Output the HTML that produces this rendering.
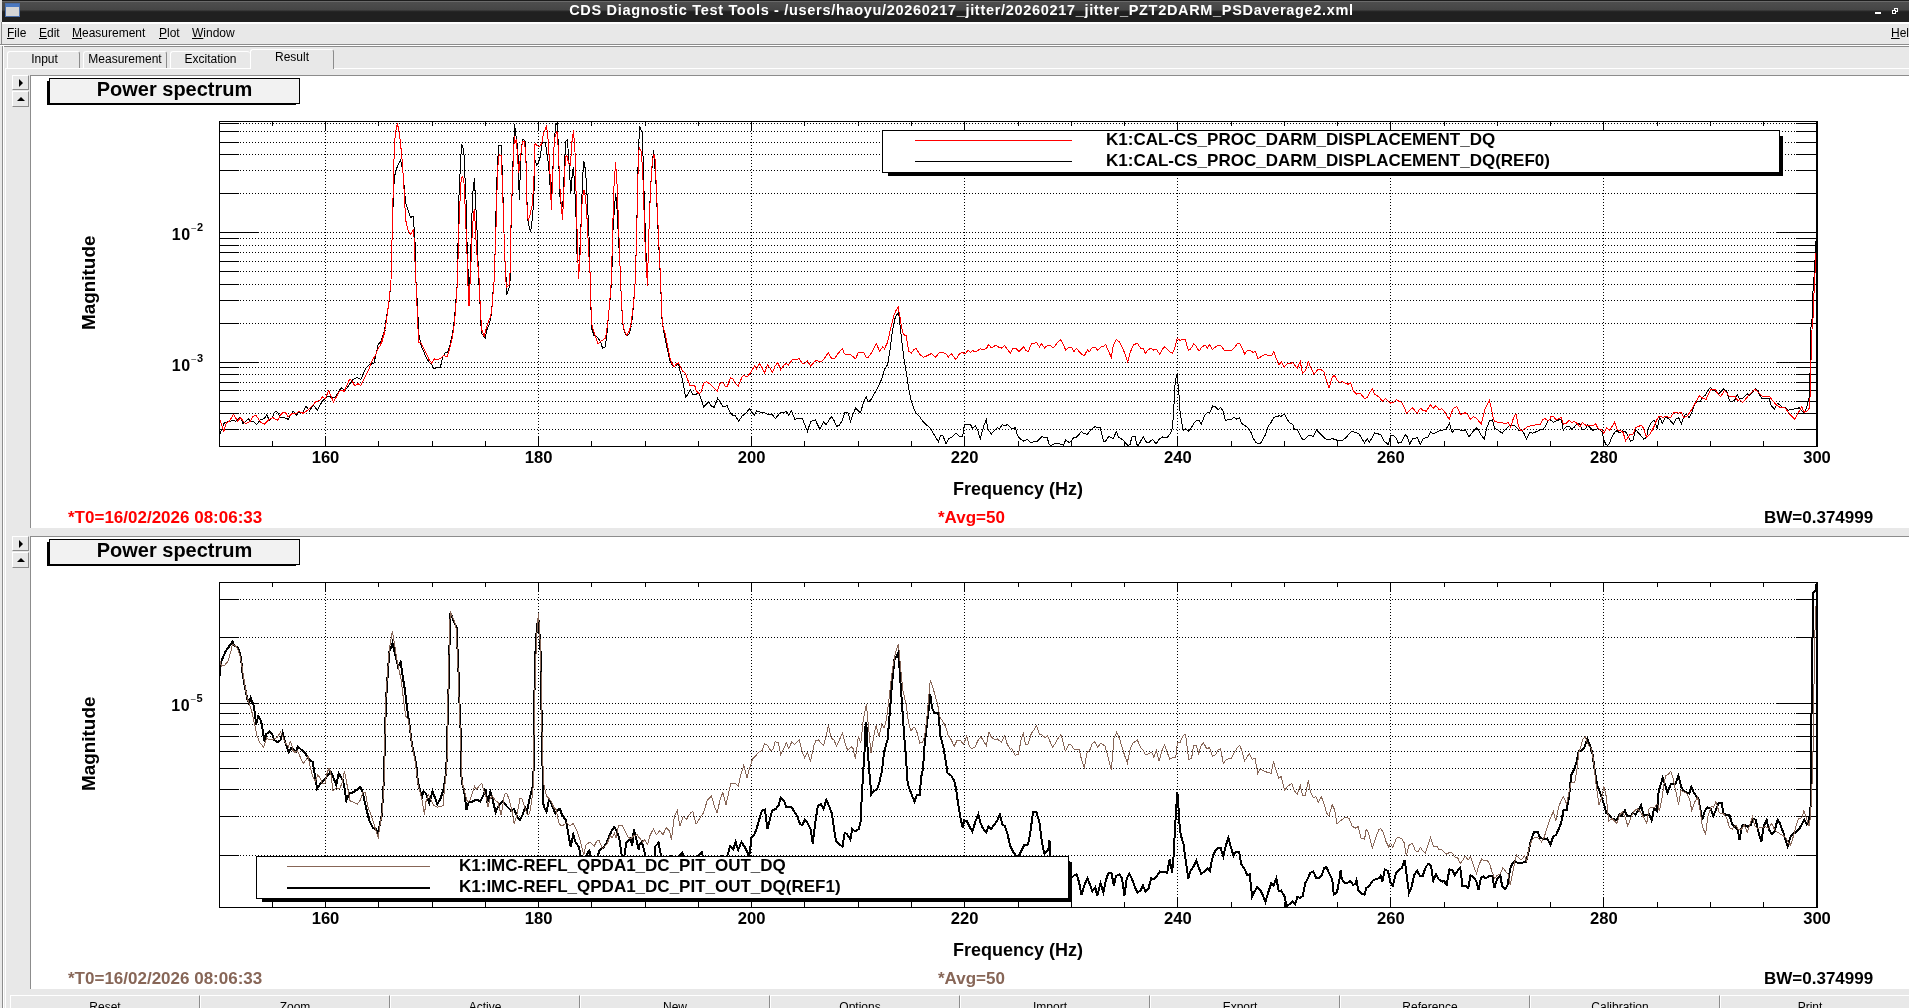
<!DOCTYPE html>
<html><head><meta charset="utf-8"><title>CDS Diagnostic Test Tools</title>
<style>
html,body{margin:0;padding:0;}
body{width:1909px;height:1008px;overflow:hidden;background:#e8e8e8;font-family:"Liberation Sans",sans-serif;position:relative;color:#000}
.abs{position:absolute}
#titlebar{position:absolute;left:0;top:0;width:1909px;height:22px;background:linear-gradient(#1c1c1c 0,#1c1c1c 1px,#6a6a6a 1px,#6a6a6a 2px,#4e4e4e 2px,#454545 10px,#2a2a2a 11px,#202020 12px,#202020 100%);}
#titlebar .t{position:absolute;left:0;width:1923px;top:1px;text-align:center;color:#fff;font-weight:bold;font-size:14.5px;line-height:18px;letter-spacing:0.684px;white-space:nowrap}
#menubar{position:absolute;left:3px;top:22px;width:1909px;height:22px;font-size:12px;}
#menubar span{position:absolute;top:4px;line-height:14px}
.tab{position:absolute;font-size:12px;line-height:14px;text-align:center}
.pad{position:absolute;left:31px;width:1878px;background:#fff}
.tbox{position:absolute;left:49px;width:249px;height:24px;border:1px solid #000;background:#f2f2f2;font-weight:bold;font-size:20px;line-height:20px;text-align:center;white-space:nowrap}
.sbtn{position:absolute;left:12px;width:15px;height:14px;border-right:1px solid #8c8c8c;border-bottom:1px solid #8c8c8c;border-top:1px solid #fff;border-left:1px solid #fff;box-sizing:content-box}
.sbtn svg{position:absolute;left:0;top:0}
.bbtn{position:absolute;top:995px;width:188px;height:20px;border-left:1px solid #fff;border-top:1px solid #fff;border-right:1px solid #8c8c8c;font-size:12px;line-height:14px;text-align:center;padding-top:4px;box-sizing:content-box}
.lbl{position:absolute;font-weight:bold;white-space:nowrap}
.ax{font-size:17px;line-height:18px}
.fq{font-size:18px;line-height:20px}
.mg{font-size:18.9px;line-height:20px}
.bt{font-size:17px;line-height:18px}
.xt{position:absolute;font-weight:bold;font-size:16.6px;line-height:16px;width:60px;text-align:center;white-space:nowrap}
.yt{position:absolute;font-weight:bold;font-size:16px;line-height:16px;width:60px;text-align:right;white-space:nowrap;letter-spacing:0.5px}
.yt sup{font-size:11px;line-height:0;position:relative;top:-9.2px;vertical-align:baseline;margin-left:1.5px;letter-spacing:0}
.yt sup i{font-style:normal;font-weight:normal;font-size:10px;color:#444;margin-left:-1px;position:relative;top:1.5px}
u{text-decoration:underline}
</style></head><body><div id="root" style="position:absolute;left:0;top:0;width:1909px;height:1008px;will-change:transform;overflow:hidden">
<div id="titlebar"><div class="t">CDS Diagnostic Test Tools - /users/haoyu/20260217_jitter/20260217_jitter_PZT2DARM_PSDaverage2.xml</div>
<svg class="abs" style="left:5px;top:3px" width="16" height="16"><rect x="0.5" y="0.5" width="14" height="13" fill="#d4d4d4" stroke="#4a6ea8"/><rect x="1" y="1" width="13" height="3" fill="#4a78c0"/></svg>
<svg class="abs" style="left:1870px;top:4px" width="36" height="14"><rect x="5" y="8" width="6" height="2" fill="#fff"/><rect x="24.5" y="4.5" width="3" height="3" fill="none" stroke="#fff"/><rect x="22.5" y="6.5" width="3" height="3" fill="#202020" stroke="#fff"/></svg>
</div>
<div id="menubar">
<span style="left:4px"><u>F</u>ile</span>
<span style="left:36px"><u>E</u>dit</span>
<span style="left:69px"><u>M</u>easurement</span>
<span style="left:156px"><u>P</u>lot</span>
<span style="left:189px"><u>W</u>indow</span>
<span style="left:1888px"><u>H</u>elp</span>
</div>
<!-- separators -->
<div class="abs" style="left:2px;top:22px;width:1909px;height:2px;background:#fff"></div>
<div class="abs" style="left:0;top:0;width:2px;height:22px;background:#e0e0e0"></div>
<div class="abs" style="left:2px;top:46px;width:1909px;height:1px;background:#8c8c8c"></div>
<div class="abs" style="left:0;top:44px;width:1909px;height:1px;background:#8c8c8c"></div>
<div class="abs" style="left:0;top:45px;width:1909px;height:1px;background:#fff"></div>
<div class="abs" style="left:1px;top:22px;width:1px;height:22px;background:#8c8c8c"></div>
<div class="abs" style="left:2px;top:46px;width:1px;height:962px;background:#8c8c8c"></div>
<div class="abs" style="left:3px;top:46px;width:1px;height:962px;background:#fff"></div>
<!-- tabs -->
<div class="abs" style="left:5px;top:68px;width:1909px;height:1px;background:#fff"></div>
<div class="abs" style="left:5px;top:68px;width:1px;height:940px;background:#fff"></div>
<div class="tab" style="left:7px;top:51px;width:73px;height:17px;border-top:1px solid #fff;border-left:1px solid #fff;border-right:1px solid #8c8c8c;border-radius:3px 3px 0 0;padding-top:0px;box-sizing:border-box;padding-left:2px">Input</div>
<div class="tab" style="left:83px;top:51px;width:84px;height:17px;border-top:1px solid #fff;border-left:1px solid #fff;border-right:1px solid #8c8c8c;border-radius:3px 3px 0 0;padding-top:0px;box-sizing:border-box">Measurement</div>
<div class="tab" style="left:170px;top:51px;width:80px;height:17px;border-top:1px solid #fff;border-left:1px solid #fff;border-radius:3px 3px 0 0;padding-top:0px;box-sizing:border-box">Excitation</div>
<div class="tab" style="left:250px;top:49px;width:84px;height:20px;border-top:1px solid #fff;border-left:1px solid #fff;border-right:1px solid #8c8c8c;background:#e8e8e8;border-radius:3px 3px 0 0;padding-top:0px;box-sizing:border-box">Result</div>

<!-- pads -->
<div class="abs" style="left:30px;top:75px;width:1879px;height:453px;background:#8c8c8c"></div>
<div class="pad" style="top:76px;height:452px"></div>
<div class="abs" style="left:30px;top:536px;width:1879px;height:453px;background:#8c8c8c"></div>
<div class="pad" style="top:537px;height:452px"></div>
<div class="sbtn" style="top:75px;height:13px"><svg width="16" height="15"><path d="M6,3 L10,7 L6,11 Z" fill="#000"/></svg></div>
<div class="sbtn" style="top:91px"><svg width="16" height="15"><path d="M4,9 L8,5 L12,9 Z" fill="#000"/></svg></div>
<div class="sbtn" style="top:536px;height:13px"><svg width="16" height="15"><path d="M6,3 L10,7 L6,11 Z" fill="#000"/></svg></div>
<div class="sbtn" style="top:552px"><svg width="16" height="15"><path d="M4,9 L8,5 L12,9 Z" fill="#000"/></svg></div>
<div style="position:absolute;left:47px;top:81px;width:249px;height:24px;background:#000"></div>
<div class="tbox" style="top:78px">Power spectrum</div>
<div style="position:absolute;left:47px;top:542px;width:249px;height:24px;background:#000"></div>
<div class="tbox" style="top:539px">Power spectrum</div>

<svg class="abs" style="left:0;top:0" width="1909" height="1008" shape-rendering="crispEdges" fill="none">
<path d="M219,123.5H1817" stroke="#000" stroke-width="1" stroke-dasharray="1 2"/>
<path d="M219,123.5H239M1796,123.5H1818" stroke="#000" stroke-width="1"/>
<path d="M219,131.5H1817" stroke="#000" stroke-width="1" stroke-dasharray="1 2"/>
<path d="M219,131.5H239M1796,131.5H1818" stroke="#000" stroke-width="1"/>
<path d="M219,142.5H1817" stroke="#000" stroke-width="1" stroke-dasharray="1 2"/>
<path d="M219,142.5H239M1796,142.5H1818" stroke="#000" stroke-width="1"/>
<path d="M219,154.5H1817" stroke="#000" stroke-width="1" stroke-dasharray="1 2"/>
<path d="M219,154.5H239M1796,154.5H1818" stroke="#000" stroke-width="1"/>
<path d="M219,170.5H1817" stroke="#000" stroke-width="1" stroke-dasharray="1 2"/>
<path d="M219,170.5H239M1796,170.5H1818" stroke="#000" stroke-width="1"/>
<path d="M219,193.5H1817" stroke="#000" stroke-width="1" stroke-dasharray="1 2"/>
<path d="M219,193.5H239M1796,193.5H1818" stroke="#000" stroke-width="1"/>
<path d="M219,232.5H1817" stroke="#000" stroke-width="1" stroke-dasharray="1 2"/>
<path d="M219,232.5H258M1776,232.5H1818" stroke="#000" stroke-width="1"/>
<path d="M219,238.5H1817" stroke="#000" stroke-width="1" stroke-dasharray="1 2"/>
<path d="M219,238.5H239M1796,238.5H1818" stroke="#000" stroke-width="1"/>
<path d="M219,245.5H1817" stroke="#000" stroke-width="1" stroke-dasharray="1 2"/>
<path d="M219,245.5H239M1796,245.5H1818" stroke="#000" stroke-width="1"/>
<path d="M219,252.5H1817" stroke="#000" stroke-width="1" stroke-dasharray="1 2"/>
<path d="M219,252.5H239M1796,252.5H1818" stroke="#000" stroke-width="1"/>
<path d="M219,261.5H1817" stroke="#000" stroke-width="1" stroke-dasharray="1 2"/>
<path d="M219,261.5H239M1796,261.5H1818" stroke="#000" stroke-width="1"/>
<path d="M219,271.5H1817" stroke="#000" stroke-width="1" stroke-dasharray="1 2"/>
<path d="M219,271.5H239M1796,271.5H1818" stroke="#000" stroke-width="1"/>
<path d="M219,284.5H1817" stroke="#000" stroke-width="1" stroke-dasharray="1 2"/>
<path d="M219,284.5H239M1796,284.5H1818" stroke="#000" stroke-width="1"/>
<path d="M219,300.5H1817" stroke="#000" stroke-width="1" stroke-dasharray="1 2"/>
<path d="M219,300.5H239M1796,300.5H1818" stroke="#000" stroke-width="1"/>
<path d="M219,323.5H1817" stroke="#000" stroke-width="1" stroke-dasharray="1 2"/>
<path d="M219,323.5H239M1796,323.5H1818" stroke="#000" stroke-width="1"/>
<path d="M219,362.5H1817" stroke="#000" stroke-width="1" stroke-dasharray="1 2"/>
<path d="M219,362.5H258M1776,362.5H1818" stroke="#000" stroke-width="1"/>
<path d="M219,367.5H1817" stroke="#000" stroke-width="1" stroke-dasharray="1 2"/>
<path d="M219,367.5H239M1796,367.5H1818" stroke="#000" stroke-width="1"/>
<path d="M219,374.5H1817" stroke="#000" stroke-width="1" stroke-dasharray="1 2"/>
<path d="M219,374.5H239M1796,374.5H1818" stroke="#000" stroke-width="1"/>
<path d="M219,382.5H1817" stroke="#000" stroke-width="1" stroke-dasharray="1 2"/>
<path d="M219,382.5H239M1796,382.5H1818" stroke="#000" stroke-width="1"/>
<path d="M219,390.5H1817" stroke="#000" stroke-width="1" stroke-dasharray="1 2"/>
<path d="M219,390.5H239M1796,390.5H1818" stroke="#000" stroke-width="1"/>
<path d="M219,401.5H1817" stroke="#000" stroke-width="1" stroke-dasharray="1 2"/>
<path d="M219,401.5H239M1796,401.5H1818" stroke="#000" stroke-width="1"/>
<path d="M219,413.5H1817" stroke="#000" stroke-width="1" stroke-dasharray="1 2"/>
<path d="M219,413.5H239M1796,413.5H1818" stroke="#000" stroke-width="1"/>
<path d="M219,429.5H1817" stroke="#000" stroke-width="1" stroke-dasharray="1 2"/>
<path d="M219,429.5H239M1796,429.5H1818" stroke="#000" stroke-width="1"/>
<path d="M325.5,121V446" stroke="#000" stroke-width="1" stroke-dasharray="1 2"/>
<path d="M538.5,121V446" stroke="#000" stroke-width="1" stroke-dasharray="1 2"/>
<path d="M751.5,121V446" stroke="#000" stroke-width="1" stroke-dasharray="1 2"/>
<path d="M964.5,121V446" stroke="#000" stroke-width="1" stroke-dasharray="1 2"/>
<path d="M1177.5,121V446" stroke="#000" stroke-width="1" stroke-dasharray="1 2"/>
<path d="M1390.5,121V446" stroke="#000" stroke-width="1" stroke-dasharray="1 2"/>
<path d="M1603.5,121V446" stroke="#000" stroke-width="1" stroke-dasharray="1 2"/>
<path d="M272.5,447V441M272.5,121V126" stroke="#000" stroke-width="1"/>
<path d="M325.5,447V436M325.5,121V131" stroke="#000" stroke-width="1"/>
<path d="M378.5,447V441M378.5,121V126" stroke="#000" stroke-width="1"/>
<path d="M432.5,447V441M432.5,121V126" stroke="#000" stroke-width="1"/>
<path d="M485.5,447V441M485.5,121V126" stroke="#000" stroke-width="1"/>
<path d="M538.5,447V436M538.5,121V131" stroke="#000" stroke-width="1"/>
<path d="M591.5,447V441M591.5,121V126" stroke="#000" stroke-width="1"/>
<path d="M645.5,447V441M645.5,121V126" stroke="#000" stroke-width="1"/>
<path d="M698.5,447V441M698.5,121V126" stroke="#000" stroke-width="1"/>
<path d="M751.5,447V436M751.5,121V131" stroke="#000" stroke-width="1"/>
<path d="M804.5,447V441M804.5,121V126" stroke="#000" stroke-width="1"/>
<path d="M858.5,447V441M858.5,121V126" stroke="#000" stroke-width="1"/>
<path d="M911.5,447V441M911.5,121V126" stroke="#000" stroke-width="1"/>
<path d="M964.5,447V436M964.5,121V131" stroke="#000" stroke-width="1"/>
<path d="M1018.5,447V441M1018.5,121V126" stroke="#000" stroke-width="1"/>
<path d="M1071.5,447V441M1071.5,121V126" stroke="#000" stroke-width="1"/>
<path d="M1124.5,447V441M1124.5,121V126" stroke="#000" stroke-width="1"/>
<path d="M1177.5,447V436M1177.5,121V131" stroke="#000" stroke-width="1"/>
<path d="M1231.5,447V441M1231.5,121V126" stroke="#000" stroke-width="1"/>
<path d="M1284.5,447V441M1284.5,121V126" stroke="#000" stroke-width="1"/>
<path d="M1337.5,447V441M1337.5,121V126" stroke="#000" stroke-width="1"/>
<path d="M1390.5,447V436M1390.5,121V131" stroke="#000" stroke-width="1"/>
<path d="M1444.5,447V441M1444.5,121V126" stroke="#000" stroke-width="1"/>
<path d="M1497.5,447V441M1497.5,121V126" stroke="#000" stroke-width="1"/>
<path d="M1550.5,447V441M1550.5,121V126" stroke="#000" stroke-width="1"/>
<path d="M1603.5,447V436M1603.5,121V131" stroke="#000" stroke-width="1"/>
<path d="M1657.5,447V441M1657.5,121V126" stroke="#000" stroke-width="1"/>
<path d="M1710.5,447V441M1710.5,121V126" stroke="#000" stroke-width="1"/>
<path d="M1763.5,447V441M1763.5,121V126" stroke="#000" stroke-width="1"/>
<clipPath id="clip121"><rect x="219" y="121" width="1599" height="326"/></clipPath>
<g clip-path="url(#clip121)" fill="none" stroke-linejoin="miter">
<path d="M219.8,434.8 L221.5,430.0 L224.5,422.3 L228.7,421.7 L232.9,420.5 L235.8,421.1 L240.0,416.9 L243.0,423.5 L248.9,418.7 L250.7,421.7 L253.1,421.1 L256.7,424.6 L260.8,419.3 L264.4,418.7 L266.8,414.5 L269.2,420.5 L272.1,418.1 L274.5,412.1 L276.9,411.5 L280.5,417.5 L284.0,417.5 L288.2,419.3 L293.0,411.0 L296.5,415.1 L298.9,412.1 L302.5,413.3 L306.1,406.2 L309.6,411.0 L313.2,405.0 L317.4,410.4 L322.1,401.4 L325.7,397.9 L328.1,396.1 L332.9,397.9 L335.2,397.3 L341.2,387.7 L344.8,390.7 L348.3,386.0 L353.1,379.4 L357.3,377.6 L360.8,379.4 L365.6,368.7 L369.8,364.5 L373.9,363.3 L377.5,347.9 L378.1,344.3 L381.7,341.3 L385.2,330.0 L380.0,343.2 L382.5,338.1 L384.7,328.8 L387.1,313.7 L389.3,300.2 L391.0,279.9 L392.6,216.2 L394.3,177.4 L396.4,169.0 L398.6,163.9 L400.6,160.2 L402.8,170.7 L403.6,180.8 L405.6,202.7 L407.8,209.4 L410.4,217.5 L413.2,216.2 L414.2,229.7 L415.1,243.2 L415.4,263.4 L415.9,279.9 L417.4,303.6 L418.8,333.9 L421.3,346.6 L424.2,352.5 L426.4,358.4 L428.9,361.7 L431.9,365.1 L434.3,368.8 L437.3,367.3 L440.4,367.3 L442.7,356.7 L445.3,352.8 L447.5,352.8 L450.0,344.9 L452.5,333.9 L454.7,316.2 L456.2,296.8 L457.6,279.9 L458.4,207.8 L459.6,182.5 L461.0,153.8 L461.8,144.5 L463.8,149.6 L464.8,173.2 L466.0,199.3 L467.2,249.9 L468.5,279.9 L469.4,292.6 L470.2,271.8 L471.1,241.5 L471.9,216.2 L472.8,193.4 L474.4,178.2 L475.8,206.1 L477.0,229.7 L477.8,255.0 L478.7,279.9 L479.8,298.5 L480.7,323.8 L482.0,333.9 L485.4,338.1 L486.6,330.5 L488.8,325.5 L490.8,318.7 L492.2,303.6 L493.3,288.4 L494.2,279.9 L495.2,248.2 L496.4,194.3 L497.5,162.2 L498.9,145.4 L501.1,145.4 L502.3,170.7 L504.0,233.1 L505.1,263.4 L506.2,279.9 L506.5,295.1 L509.0,288.4 L510.2,279.9 L510.7,249.9 L511.2,216.2 L512.4,185.8 L513.2,153.8 L514.6,124.3 L515.8,134.4 L516.9,142.0 L518.0,154.6 L518.6,182.5 L519.6,200.2 L520.3,165.6 L521.7,145.4 L522.8,139.5 L525.0,140.3 L526.1,162.2 L526.7,196.0 L528.1,222.9 L530.6,232.2 L532.6,216.2 L533.8,197.6 L535.0,159.7 L536.7,164.8 L538.4,163.1 L540.1,157.2 L542.1,142.8 L545.5,142.8 L546.8,152.1 L548.5,163.9 L549.8,182.5 L551.0,197.6 L552.7,172.3 L554.1,145.4 L555.6,125.1 L557.3,122.6 L558.3,145.4 L559.8,196.0 L561.5,206.9 L562.8,206.1 L564.5,165.6 L565.7,141.1 L567.4,140.0 L568.4,153.8 L569.6,172.3 L570.8,194.3 L572.4,172.3 L573.5,167.3 L574.6,185.8 L575.8,209.4 L577.2,261.7 L579.2,260.0 L580.5,239.8 L581.9,196.0 L583.1,170.7 L583.9,161.4 L585.6,170.7 L587.3,199.3 L589.0,236.4 L590.1,275.2 L590.7,279.9 L591.0,310.3 L591.8,328.8 L594.0,335.6 L596.1,336.4 L598.2,338.1 L600.8,342.3 L602.5,348.2 L605.0,347.1 L606.7,337.3 L607.9,322.1 L609.2,308.6 L610.6,293.4 L611.7,279.9 L612.9,231.4 L614.3,211.1 L615.6,192.6 L617.1,209.4 L618.5,239.8 L619.8,260.0 L620.5,279.9 L621.5,301.9 L622.7,323.8 L624.4,332.2 L626.9,335.6 L629.4,333.6 L631.5,325.5 L632.8,312.0 L634.2,295.1 L635.3,279.9 L636.2,248.2 L637.4,199.3 L638.2,157.2 L639.6,126.5 L642.4,132.7 L643.4,170.7 L644.6,209.4 L645.8,249.9 L647.2,273.5 L648.0,263.4 L649.2,222.9 L650.5,187.5 L652.2,165.6 L653.6,149.6 L654.7,163.9 L656.1,185.8 L657.6,219.6 L659.0,249.9 L660.1,271.8 L660.5,279.9 L661.2,298.5 L661.8,317.0 L663.2,328.8 L665.2,339.0 L666.9,347.4 L668.2,352.5 L669.9,360.9 L671.9,365.1 L674.1,366.8 L676.3,365.1 L678.4,363.4 L680.0,371.0 L681.7,376.1 L683.4,384.5 L685.6,397.2 L687.6,394.6 L690.2,389.6 L692.7,394.3 L695.0,394.6 L696.1,394.2 L699.1,393.0 L701.4,399.8 L703.7,407.1 L706.7,403.6 L709.0,402.1 L711.3,405.9 L714.3,407.4 L717.6,398.0 L719.6,401.3 L722.7,406.2 L727.2,405.9 L730.3,412.7 L732.5,415.0 L734.8,415.0 L738.6,421.1 L742.4,415.8 L746.2,412.7 L749.7,408.6 L752.3,412.7 L754.6,415.0 L756.8,410.8 L759.9,412.0 L764.4,412.7 L767.5,414.3 L772.0,414.3 L775.4,418.4 L780.4,412.7 L783.0,412.7 L786.5,411.7 L788.7,415.0 L791.5,410.8 L794.8,419.3 L798.6,418.4 L802.4,418.8 L807.4,431.3 L810.8,421.4 L815.3,419.9 L819.9,429.4 L823.7,421.8 L826.0,424.9 L831.3,416.5 L833.6,419.6 L836.6,426.4 L839.6,424.9 L841.9,421.1 L845.0,412.3 L848.0,412.7 L850.6,421.8 L852.5,415.0 L855.6,408.2 L860.4,412.7 L863.9,401.3 L866.2,396.5 L868.2,402.1 L870.8,399.8 L876.1,390.7 L879.1,384.6 L882.2,377.8 L884.4,369.4 L887.5,364.9 L889.8,351.2 L892.0,334.5 L894.3,320.8 L895.8,316.0 L898.6,312.9 L900.1,325.4 L901.9,342.1 L904.2,360.3 L906.5,374.0 L908.8,389.2 L911.0,399.8 L913.3,407.4 L915.6,412.7 L919.4,416.5 L923.9,422.6 L930.0,427.9 L934.6,435.5 L938.4,441.6 L940.7,435.5 L942.9,435.5 L946.0,443.9 L949.0,438.6 L952.0,437.0 L955.8,433.2 L959.6,436.3 L962.7,436.3 L964.2,425.3 L967.2,424.1 L970.3,424.1 L972.6,428.7 L975.3,425.6 L977.9,431.0 L980.0,437.8 L980.3,438.6 L984.1,424.9 L986.4,419.6 L987.9,429.4 L991.4,434.0 L994.7,430.2 L997.5,427.5 L999.3,428.7 L1002.3,424.6 L1004.6,425.9 L1007.4,424.6 L1011.5,428.4 L1015.3,427.9 L1017.5,435.5 L1019.8,438.6 L1023.6,441.1 L1027.4,439.3 L1031.2,443.1 L1033.5,441.6 L1037.3,441.1 L1041.8,436.6 L1044.9,437.5 L1047.2,437.5 L1049.1,444.6 L1051.0,445.7 L1054.0,443.9 L1057.0,443.1 L1061.6,444.6 L1063.6,445.4 L1065.7,439.6 L1068.9,442.4 L1071.0,441.6 L1073.7,437.5 L1076.0,437.8 L1081.3,431.7 L1083.6,433.2 L1087.1,434.5 L1091.2,429.4 L1095.5,426.4 L1097.3,427.9 L1100.3,427.5 L1101.8,434.5 L1103.8,441.6 L1105.6,441.1 L1108.7,436.6 L1113.2,438.6 L1116.3,431.7 L1118.6,437.0 L1123.1,440.1 L1125.4,442.7 L1127.7,445.4 L1130.0,444.6 L1131.9,437.0 L1135.3,436.6 L1136.5,444.6 L1138.3,445.4 L1143.3,436.6 L1146.7,442.7 L1148.9,442.4 L1152.7,439.3 L1156.1,443.9 L1159.6,438.6 L1162.6,437.0 L1167.2,437.3 L1170.2,434.0 L1172.5,427.9 L1174.0,404.4 L1175.2,381.6 L1177.0,374.0 L1178.6,389.2 L1180.1,412.0 L1181.6,422.6 L1183.4,430.2 L1185.4,428.7 L1188.4,431.0 L1190.7,428.7 L1193.8,423.4 L1196.5,420.3 L1199.1,420.3 L1201.3,424.4 L1204.4,415.8 L1207.4,412.3 L1209.7,412.7 L1212.7,405.9 L1215.0,406.7 L1218.1,409.7 L1220.8,407.4 L1223.4,412.0 L1225.4,420.3 L1228.7,419.6 L1231.7,419.6 L1234.0,417.3 L1236.3,419.1 L1239.6,417.7 L1241.6,423.4 L1245.1,425.6 L1248.4,428.2 L1250.7,431.7 L1253.0,437.8 L1255.7,442.4 L1257.6,443.1 L1260.6,443.1 L1262.9,439.3 L1265.0,435.5 L1265.3,435.5 L1268.4,425.6 L1270.6,423.4 L1273.7,417.3 L1276.4,416.8 L1279.0,415.8 L1281.3,416.2 L1284.3,413.8 L1287.3,419.9 L1290.4,423.4 L1292.7,424.4 L1294.2,429.0 L1297.2,429.4 L1300.3,435.5 L1302.5,439.3 L1304.8,439.0 L1309.4,435.1 L1313.2,436.6 L1316.5,430.2 L1320.8,434.5 L1325.3,438.6 L1329.1,440.1 L1332.6,438.1 L1334.4,439.6 L1339.0,440.5 L1342.8,440.1 L1346.6,437.0 L1350.7,432.0 L1353.4,431.7 L1355.7,432.9 L1358.7,433.2 L1364.5,443.1 L1367.1,438.6 L1369.4,442.4 L1374.7,432.9 L1378.5,434.0 L1380.8,434.5 L1383.8,440.8 L1388.4,444.6 L1390.6,435.5 L1393.7,436.0 L1396.3,438.1 L1398.2,443.1 L1401.3,442.1 L1405.1,434.5 L1407.1,436.6 L1409.6,444.2 L1412.4,439.0 L1417.2,437.5 L1420.3,444.2 L1423.3,438.6 L1428.3,437.0 L1430.4,431.7 L1433.2,434.0 L1439.3,431.0 L1446.1,429.0 L1449.4,423.4 L1452.2,432.5 L1454.4,429.4 L1458.2,429.4 L1463.6,431.0 L1465.1,429.4 L1468.9,437.0 L1473.4,431.0 L1476.5,427.9 L1478.8,430.2 L1481.3,435.5 L1484.5,439.0 L1486.3,429.0 L1489.4,421.1 L1492.4,419.9 L1494.7,428.7 L1497.0,429.4 L1502.3,433.2 L1505.3,429.4 L1509.1,425.9 L1513.7,425.3 L1516.0,426.9 L1519.0,430.5 L1522.0,430.2 L1524.3,434.0 L1526.6,439.3 L1529.6,432.5 L1532.7,433.2 L1538.0,431.0 L1540.3,429.4 L1542.6,429.9 L1545.6,425.9 L1547.9,421.4 L1550.0,419.3 L1550.3,419.9 L1553.4,422.3 L1556.4,420.8 L1558.7,419.9 L1561.4,419.3 L1563.2,430.2 L1566.3,426.4 L1569.3,426.4 L1571.6,429.0 L1574.6,426.9 L1577.2,423.4 L1579.9,424.1 L1582.2,429.4 L1585.3,429.0 L1587.5,424.9 L1589.8,427.2 L1592.9,430.2 L1598.2,428.7 L1602.0,431.7 L1603.9,439.3 L1605.8,444.6 L1607.6,445.4 L1609.6,443.1 L1611.8,437.0 L1614.6,432.5 L1617.2,430.5 L1619.4,432.9 L1622.5,431.0 L1625.5,431.7 L1627.8,435.5 L1630.4,441.1 L1633.1,440.1 L1635.7,429.4 L1638.4,432.9 L1641.5,436.3 L1643.7,439.0 L1646.5,437.5 L1648.3,428.7 L1651.3,422.3 L1654.4,420.3 L1657.1,428.7 L1659.7,417.3 L1662.3,423.4 L1665.8,416.8 L1668.8,418.8 L1673.4,424.1 L1676.4,418.4 L1678.7,417.7 L1681.3,424.1 L1684.0,416.5 L1686.3,413.8 L1689.3,417.7 L1691.6,413.2 L1694.6,404.1 L1697.4,401.3 L1700.0,402.1 L1703.0,396.8 L1705.3,395.3 L1708.3,389.9 L1710.6,387.4 L1713.3,391.0 L1715.4,390.7 L1718.2,394.5 L1720.9,391.5 L1723.5,388.9 L1726.5,391.0 L1729.6,400.6 L1731.9,402.1 L1734.9,399.8 L1737.2,394.5 L1739.4,398.6 L1742.5,398.3 L1747.8,393.7 L1749.3,395.6 L1755.4,388.7 L1757.7,391.0 L1761.5,398.3 L1764.5,398.3 L1769.1,398.6 L1771.3,405.6 L1774.4,408.9 L1777.4,403.2 L1779.7,404.7 L1782.0,407.4 L1785.0,407.1 L1788.1,410.5 L1790.3,409.2 L1795.7,408.9 L1799.5,407.7 L1802.5,412.0 L1804.8,412.3 L1807.0,405.9 L1809.0,398.3 L1809.6,374.0 L1810.5,371.0 L1810.8,328.4 L1812.1,317.8 L1812.7,295.0 L1814.5,270.0 L1815.5,250.0 L1816.5,232.0" stroke="#000" stroke-width="1"/>
<path d="M219.5,418.7 L223.9,431.2 L226.3,422.9 L229.3,421.1 L233.5,414.5 L237.6,421.1 L240.6,418.1 L245.4,423.5 L250.1,421.7 L253.1,416.3 L256.1,415.5 L260.8,422.3 L264.4,424.0 L268.6,419.9 L272.7,417.5 L277.5,420.5 L281.7,413.3 L285.2,412.1 L288.2,416.9 L291.8,413.9 L296.0,413.9 L298.9,411.5 L303.1,413.3 L309.0,409.2 L315.6,402.0 L319.8,400.2 L322.7,396.7 L325.1,399.0 L328.7,390.7 L333.5,402.0 L338.8,392.5 L341.2,390.1 L344.2,391.3 L349.5,379.4 L351.9,380.6 L354.9,386.0 L357.9,383.6 L360.8,385.4 L368.6,369.9 L372.1,360.4 L376.3,353.8 L377.5,349.6 L381.7,343.1 L385.2,330.6 L380.0,345.7 L382.5,339.0 L385.1,328.8 L387.1,315.4 L389.3,298.5 L391.0,279.9 L392.6,216.2 L393.8,163.9 L395.2,133.6 L397.4,123.4 L399.4,133.6 L401.6,153.8 L403.6,180.8 L405.6,219.6 L407.8,229.7 L410.4,234.2 L413.7,229.7 L415.1,263.4 L415.9,279.9 L416.8,300.2 L417.9,327.2 L418.8,342.3 L421.3,343.2 L424.2,349.1 L428.9,359.2 L431.9,363.4 L434.3,358.9 L437.3,360.0 L440.4,358.4 L443.2,355.8 L447.5,356.2 L450.0,347.4 L452.5,337.3 L454.7,320.4 L456.2,300.2 L457.6,279.9 L458.4,239.8 L459.6,209.4 L461.0,182.5 L462.1,176.6 L463.8,179.1 L464.8,199.3 L466.9,249.9 L467.7,279.9 L469.0,306.1 L470.2,279.9 L471.9,239.8 L473.3,216.2 L474.4,208.6 L475.8,236.4 L477.0,255.0 L479.2,279.9 L479.8,296.8 L480.7,317.0 L482.0,330.5 L484.2,336.4 L486.2,328.0 L488.4,322.1 L490.8,315.4 L492.2,305.2 L493.3,290.1 L494.2,279.9 L495.2,249.9 L496.4,216.2 L497.5,169.0 L499.2,154.6 L501.1,155.5 L502.3,180.8 L504.0,233.1 L505.1,263.4 L505.6,279.9 L506.8,286.7 L509.0,285.0 L509.9,279.9 L510.2,263.4 L511.2,216.2 L513.2,162.2 L514.4,136.1 L515.4,142.8 L516.3,138.6 L517.5,155.5 L518.6,173.2 L520.3,158.8 L522.5,141.1 L524.7,142.0 L526.1,163.9 L526.7,201.0 L528.1,220.4 L530.1,214.5 L532.3,204.4 L533.8,182.5 L535.0,143.7 L536.7,145.4 L539.2,147.0 L541.7,143.7 L543.4,133.6 L546.5,126.0 L548.2,140.3 L549.8,169.0 L551.4,210.3 L552.7,175.7 L554.4,138.6 L556.9,131.0 L558.3,148.7 L559.8,185.8 L561.1,202.7 L562.5,220.4 L564.0,187.5 L565.4,157.2 L567.0,155.5 L568.7,163.9 L570.4,165.6 L572.1,140.3 L573.5,130.2 L575.1,153.8 L576.3,202.7 L577.5,246.5 L578.5,278.6 L579.7,263.4 L580.9,229.7 L582.2,199.3 L583.9,190.0 L585.6,197.6 L587.3,222.9 L588.6,249.9 L589.8,270.2 L590.7,279.9 L591.0,306.9 L591.8,324.6 L594.0,332.2 L596.1,338.1 L598.2,344.0 L600.8,341.0 L603.3,339.8 L605.5,338.1 L607.2,327.2 L608.7,313.7 L610.0,298.5 L611.4,279.9 L612.6,233.1 L613.9,187.5 L615.6,162.2 L617.1,185.8 L618.5,222.9 L619.8,260.0 L620.5,279.9 L621.5,300.2 L622.7,322.1 L624.4,331.4 L626.9,335.3 L629.1,331.4 L631.1,323.8 L632.8,310.3 L634.2,296.8 L635.3,279.9 L636.2,249.9 L637.4,202.7 L638.2,165.6 L639.2,147.0 L641.2,151.3 L642.6,169.0 L643.8,202.7 L645.0,241.5 L646.3,266.8 L647.5,285.8 L648.3,249.9 L649.7,209.4 L651.4,174.0 L652.5,160.5 L653.9,154.6 L655.1,159.7 L656.1,182.5 L657.6,216.2 L659.0,246.5 L660.1,270.2 L660.6,279.9 L661.2,296.8 L661.8,315.4 L663.2,327.2 L665.2,333.9 L666.9,342.3 L668.2,349.1 L669.9,357.5 L671.9,363.4 L674.1,366.8 L676.3,364.3 L678.4,362.6 L680.0,366.0 L682.6,371.0 L685.1,373.0 L687.6,379.4 L690.2,385.9 L692.7,385.3 L695.0,386.2 L696.1,390.7 L699.1,393.7 L701.4,391.5 L703.7,383.1 L706.4,381.6 L709.7,383.9 L713.5,387.7 L717.3,391.2 L719.6,383.9 L722.7,382.3 L725.7,386.9 L727.2,386.9 L730.3,377.8 L732.5,378.2 L735.6,383.9 L738.3,386.1 L742.4,376.3 L743.9,375.2 L747.0,377.0 L750.8,372.5 L754.6,365.6 L756.5,368.7 L759.6,363.4 L762.2,367.9 L764.4,373.2 L767.5,364.9 L769.8,367.9 L772.5,372.2 L775.1,366.1 L777.8,362.6 L780.7,369.7 L784.2,364.9 L786.5,363.4 L788.4,364.9 L792.1,360.0 L795.6,359.6 L799.1,358.8 L802.4,363.4 L804.7,363.1 L807.4,361.1 L810.8,366.1 L814.6,361.5 L816.8,360.3 L819.9,361.8 L822.2,361.1 L825.2,357.3 L828.2,352.7 L831.3,358.0 L835.1,358.0 L838.1,353.5 L842.4,348.5 L844.5,353.9 L848.0,354.5 L851.0,355.0 L855.6,358.8 L858.3,352.4 L860.4,352.7 L863.2,352.0 L866.2,357.0 L868.2,357.3 L871.5,352.7 L873.8,348.2 L876.5,343.6 L879.4,351.2 L882.9,346.7 L884.4,348.9 L887.0,343.6 L889.0,336.0 L891.3,325.4 L893.6,316.3 L895.8,311.0 L898.1,306.8 L899.6,314.7 L901.2,325.4 L903.4,334.8 L906.0,335.3 L907.5,343.6 L908.8,351.5 L911.5,353.0 L914.1,349.4 L916.3,348.5 L919.4,353.9 L923.2,357.3 L927.0,355.8 L931.5,353.5 L935.3,357.3 L939.1,353.0 L942.2,352.4 L946.0,353.9 L948.3,357.0 L951.3,353.5 L955.8,359.6 L959.6,353.5 L962.7,352.4 L965.0,354.2 L968.0,350.4 L970.3,352.4 L972.6,350.4 L974.8,352.0 L977.9,350.4 L980.0,348.9 L980.3,348.5 L983.4,350.0 L986.4,348.5 L988.7,344.4 L991.4,347.9 L995.5,345.4 L998.5,347.0 L1002.0,348.2 L1004.6,345.4 L1007.7,349.7 L1010.4,353.2 L1013.0,348.5 L1015.7,348.2 L1019.1,351.5 L1023.6,346.7 L1025.9,350.4 L1028.2,351.5 L1031.5,343.9 L1033.9,343.6 L1036.5,342.5 L1039.6,347.0 L1041.5,343.6 L1044.6,347.9 L1047.9,345.1 L1050.2,345.6 L1053.2,347.9 L1057.0,343.3 L1060.4,339.5 L1062.8,343.3 L1065.7,350.0 L1068.9,347.4 L1071.5,347.4 L1074.0,351.5 L1076.5,348.5 L1079.8,352.4 L1084.1,356.2 L1087.7,349.4 L1089.2,352.0 L1092.3,347.4 L1095.5,347.4 L1097.7,350.4 L1101.1,346.7 L1104.1,345.9 L1105.6,344.4 L1108.7,351.5 L1111.3,357.3 L1113.2,345.9 L1116.3,339.5 L1119.3,341.8 L1122.4,347.4 L1125.4,355.0 L1127.7,361.8 L1130.3,352.0 L1133.7,344.4 L1137.5,343.6 L1140.6,348.2 L1143.3,348.5 L1145.4,353.5 L1148.2,349.7 L1150.9,348.2 L1153.5,350.0 L1156.5,349.4 L1159.6,354.2 L1162.6,348.9 L1164.9,346.7 L1167.9,349.7 L1171.0,352.7 L1172.5,353.2 L1174.8,348.2 L1177.3,338.3 L1180.1,340.6 L1182.4,339.4 L1185.4,339.5 L1186.9,345.9 L1188.4,350.4 L1190.7,348.9 L1193.8,343.6 L1196.0,346.3 L1199.1,351.2 L1202.1,346.7 L1205.1,345.1 L1207.4,347.9 L1209.7,344.4 L1212.3,349.4 L1215.8,346.7 L1218.1,345.1 L1220.3,345.1 L1224.1,350.0 L1227.2,350.4 L1231.7,350.4 L1234.8,347.4 L1237.0,343.9 L1239.6,343.6 L1242.4,348.9 L1244.6,353.9 L1247.4,350.4 L1250.7,350.9 L1253.0,352.4 L1255.3,351.2 L1257.9,358.5 L1261.4,356.5 L1265.0,354.7 L1265.3,354.5 L1268.4,355.5 L1271.4,355.8 L1273.7,351.5 L1276.4,358.8 L1279.0,365.2 L1281.3,361.5 L1284.3,367.2 L1287.3,363.4 L1290.4,363.4 L1292.7,362.6 L1297.2,368.2 L1300.3,361.5 L1302.5,373.7 L1305.6,370.7 L1308.3,361.5 L1310.9,367.9 L1313.9,374.3 L1317.7,369.7 L1320.8,369.4 L1323.8,371.7 L1326.8,381.6 L1329.1,388.0 L1332.2,377.0 L1334.4,375.5 L1337.5,380.8 L1339.8,382.3 L1342.0,381.6 L1348.1,384.3 L1350.7,382.8 L1353.4,391.0 L1356.5,394.0 L1360.3,393.4 L1364.8,398.6 L1367.1,397.5 L1370.1,391.9 L1372.4,388.9 L1374.7,394.5 L1378.5,396.5 L1382.7,401.3 L1385.3,398.6 L1390.6,403.2 L1393.7,402.1 L1396.3,399.5 L1399.0,401.3 L1401.6,402.1 L1404.3,407.4 L1406.6,413.2 L1409.6,410.1 L1412.4,407.7 L1417.2,413.2 L1420.3,408.2 L1423.3,410.5 L1426.3,411.2 L1430.4,404.7 L1433.2,408.2 L1435.9,405.6 L1439.3,409.7 L1441.5,408.6 L1444.6,411.7 L1449.1,419.3 L1452.9,409.2 L1454.4,407.7 L1457.0,406.7 L1460.5,414.7 L1465.1,412.7 L1467.4,414.3 L1470.4,419.3 L1473.4,416.5 L1476.5,418.4 L1481.3,424.1 L1484.8,409.7 L1487.1,404.7 L1489.4,400.6 L1490.9,406.7 L1493.2,418.0 L1494.7,421.8 L1500.0,422.3 L1505.3,423.4 L1508.4,422.6 L1510.7,427.2 L1513.7,417.3 L1516.0,413.8 L1518.3,425.6 L1521.3,431.0 L1523.6,429.4 L1527.4,426.9 L1531.9,425.3 L1536.5,424.9 L1540.3,424.1 L1542.6,419.9 L1544.8,418.4 L1547.9,420.8 L1550.0,418.8 L1550.3,416.5 L1553.4,416.5 L1556.4,419.9 L1558.7,418.8 L1561.4,417.3 L1563.2,424.1 L1566.3,423.4 L1569.3,420.3 L1572.0,422.6 L1574.6,421.4 L1577.7,424.1 L1579.9,426.9 L1582.2,422.6 L1586.0,425.3 L1589.8,425.3 L1593.6,425.9 L1595.4,423.4 L1598.2,428.7 L1602.0,429.9 L1603.9,433.2 L1606.5,427.9 L1609.6,430.2 L1612.1,426.4 L1614.6,422.3 L1617.2,429.9 L1620.2,430.5 L1623.2,432.5 L1625.5,441.1 L1630.1,434.5 L1633.1,434.0 L1635.7,427.2 L1638.4,426.9 L1641.0,424.9 L1643.4,427.9 L1646.5,437.0 L1649.8,434.5 L1653.6,427.5 L1656.7,419.9 L1659.2,416.2 L1663.5,417.3 L1665.8,416.2 L1670.3,417.7 L1674.1,412.3 L1678.7,413.2 L1681.3,412.3 L1684.0,417.7 L1687.0,416.2 L1690.1,412.0 L1694.6,404.1 L1697.4,399.5 L1699.5,395.6 L1703.0,398.3 L1706.0,399.5 L1710.6,389.9 L1713.3,389.5 L1715.4,389.9 L1718.2,394.5 L1720.9,396.5 L1724.3,390.4 L1726.5,392.2 L1728.8,396.0 L1734.9,396.5 L1737.9,400.6 L1739.4,399.5 L1742.5,402.6 L1747.8,396.5 L1752.4,391.5 L1754.6,389.5 L1757.7,391.5 L1762.2,396.5 L1769.1,396.0 L1772.1,399.8 L1775.9,404.7 L1779.7,407.1 L1785.0,407.7 L1790.3,415.0 L1794.9,419.3 L1798.7,412.0 L1801.7,406.7 L1804.0,412.3 L1807.8,410.5 L1809.6,407.4 L1810.5,386.1 L1811.1,355.8 L1812.4,318.5 L1813.6,317.8 L1813.9,295.0 L1814.5,285.0 L1815.5,262.0 L1816.5,244.0 L1817.5,232.0 L1817.5,227.0" stroke="#ff0000" stroke-width="1"/>
</g>
<rect x="219.5" y="121.5" width="1598" height="325" fill="none" stroke="#000" stroke-width="1"/>
<path d="M1816.5,121V447" stroke="#000" stroke-width="1"/>
<rect x="888" y="136" width="895" height="40" fill="#000"/>
<rect x="882.5" y="130.5" width="897" height="42" fill="#fff" stroke="#000" stroke-width="1"/>
<path d="M915,140.5H1072" stroke="#ff0000" stroke-width="1"/>
<path d="M915,161.5H1072" stroke="#000" stroke-width="1"/>
<path d="M219,599.5H1817" stroke="#000" stroke-width="1" stroke-dasharray="1 2"/>
<path d="M219,599.5H239M1796,599.5H1818" stroke="#000" stroke-width="1"/>
<path d="M219,637.5H1817" stroke="#000" stroke-width="1" stroke-dasharray="1 2"/>
<path d="M219,637.5H239M1796,637.5H1818" stroke="#000" stroke-width="1"/>
<path d="M219,703.5H1817" stroke="#000" stroke-width="1" stroke-dasharray="1 2"/>
<path d="M219,703.5H258M1776,703.5H1818" stroke="#000" stroke-width="1"/>
<path d="M219,713.5H1817" stroke="#000" stroke-width="1" stroke-dasharray="1 2"/>
<path d="M219,713.5H239M1796,713.5H1818" stroke="#000" stroke-width="1"/>
<path d="M219,724.5H1817" stroke="#000" stroke-width="1" stroke-dasharray="1 2"/>
<path d="M219,724.5H239M1796,724.5H1818" stroke="#000" stroke-width="1"/>
<path d="M219,736.5H1817" stroke="#000" stroke-width="1" stroke-dasharray="1 2"/>
<path d="M219,736.5H239M1796,736.5H1818" stroke="#000" stroke-width="1"/>
<path d="M219,751.5H1817" stroke="#000" stroke-width="1" stroke-dasharray="1 2"/>
<path d="M219,751.5H239M1796,751.5H1818" stroke="#000" stroke-width="1"/>
<path d="M219,768.5H1817" stroke="#000" stroke-width="1" stroke-dasharray="1 2"/>
<path d="M219,768.5H239M1796,768.5H1818" stroke="#000" stroke-width="1"/>
<path d="M219,789.5H1817" stroke="#000" stroke-width="1" stroke-dasharray="1 2"/>
<path d="M219,789.5H239M1796,789.5H1818" stroke="#000" stroke-width="1"/>
<path d="M219,816.5H1817" stroke="#000" stroke-width="1" stroke-dasharray="1 2"/>
<path d="M219,816.5H239M1796,816.5H1818" stroke="#000" stroke-width="1"/>
<path d="M219,855.5H1817" stroke="#000" stroke-width="1" stroke-dasharray="1 2"/>
<path d="M219,855.5H239M1796,855.5H1818" stroke="#000" stroke-width="1"/>
<path d="M325.5,582V907" stroke="#000" stroke-width="1" stroke-dasharray="1 2"/>
<path d="M538.5,582V907" stroke="#000" stroke-width="1" stroke-dasharray="1 2"/>
<path d="M751.5,582V907" stroke="#000" stroke-width="1" stroke-dasharray="1 2"/>
<path d="M964.5,582V907" stroke="#000" stroke-width="1" stroke-dasharray="1 2"/>
<path d="M1177.5,582V907" stroke="#000" stroke-width="1" stroke-dasharray="1 2"/>
<path d="M1390.5,582V907" stroke="#000" stroke-width="1" stroke-dasharray="1 2"/>
<path d="M1603.5,582V907" stroke="#000" stroke-width="1" stroke-dasharray="1 2"/>
<path d="M272.5,908V902M272.5,582V587" stroke="#000" stroke-width="1"/>
<path d="M325.5,908V897M325.5,582V592" stroke="#000" stroke-width="1"/>
<path d="M378.5,908V902M378.5,582V587" stroke="#000" stroke-width="1"/>
<path d="M432.5,908V902M432.5,582V587" stroke="#000" stroke-width="1"/>
<path d="M485.5,908V902M485.5,582V587" stroke="#000" stroke-width="1"/>
<path d="M538.5,908V897M538.5,582V592" stroke="#000" stroke-width="1"/>
<path d="M591.5,908V902M591.5,582V587" stroke="#000" stroke-width="1"/>
<path d="M645.5,908V902M645.5,582V587" stroke="#000" stroke-width="1"/>
<path d="M698.5,908V902M698.5,582V587" stroke="#000" stroke-width="1"/>
<path d="M751.5,908V897M751.5,582V592" stroke="#000" stroke-width="1"/>
<path d="M804.5,908V902M804.5,582V587" stroke="#000" stroke-width="1"/>
<path d="M858.5,908V902M858.5,582V587" stroke="#000" stroke-width="1"/>
<path d="M911.5,908V902M911.5,582V587" stroke="#000" stroke-width="1"/>
<path d="M964.5,908V897M964.5,582V592" stroke="#000" stroke-width="1"/>
<path d="M1018.5,908V902M1018.5,582V587" stroke="#000" stroke-width="1"/>
<path d="M1071.5,908V902M1071.5,582V587" stroke="#000" stroke-width="1"/>
<path d="M1124.5,908V902M1124.5,582V587" stroke="#000" stroke-width="1"/>
<path d="M1177.5,908V897M1177.5,582V592" stroke="#000" stroke-width="1"/>
<path d="M1231.5,908V902M1231.5,582V587" stroke="#000" stroke-width="1"/>
<path d="M1284.5,908V902M1284.5,582V587" stroke="#000" stroke-width="1"/>
<path d="M1337.5,908V902M1337.5,582V587" stroke="#000" stroke-width="1"/>
<path d="M1390.5,908V897M1390.5,582V592" stroke="#000" stroke-width="1"/>
<path d="M1444.5,908V902M1444.5,582V587" stroke="#000" stroke-width="1"/>
<path d="M1497.5,908V902M1497.5,582V587" stroke="#000" stroke-width="1"/>
<path d="M1550.5,908V902M1550.5,582V587" stroke="#000" stroke-width="1"/>
<path d="M1603.5,908V897M1603.5,582V592" stroke="#000" stroke-width="1"/>
<path d="M1657.5,908V902M1657.5,582V587" stroke="#000" stroke-width="1"/>
<path d="M1710.5,908V902M1710.5,582V587" stroke="#000" stroke-width="1"/>
<path d="M1763.5,908V902M1763.5,582V587" stroke="#000" stroke-width="1"/>
<clipPath id="clip582"><rect x="219" y="582" width="1599" height="326"/></clipPath>
<g clip-path="url(#clip582)" fill="none" stroke-linejoin="miter">
<path d="M219.5,675.8 L220.7,662.9 L225.5,651.5 L232.5,641.5 L234.4,645.9 L238.1,647.5 L240.9,657.2 L242.5,672.6 L244.9,687.1 L247.3,699.2 L249.0,703.3 L250.6,697.6 L253.8,705.7 L256.2,724.3 L258.3,716.2 L261.1,721.1 L263.2,733.2 L264.3,741.3 L266.4,734.0 L269.7,731.6 L272.4,734.8 L274.0,739.7 L277.3,742.4 L280.5,740.1 L282.6,732.4 L284.5,739.7 L286.2,745.0 L288.6,752.3 L291.0,748.2 L294.2,749.9 L295.9,751.5 L297.8,746.6 L301.5,749.9 L304.7,752.3 L308.0,757.9 L310.4,760.4 L312.8,762.0 L314.4,772.5 L316.1,782.2 L317.2,788.7 L320.1,783.8 L325.0,779.0 L328.2,774.9 L330.6,771.7 L333.0,776.5 L336.3,785.4 L338.7,773.3 L341.1,777.3 L342.7,779.8 L344.4,787.0 L346.3,800.8 L349.2,793.5 L352.5,792.7 L357.3,789.5 L360.5,787.0 L363.0,793.5 L364.6,801.6 L367.0,811.3 L369.4,821.0 L372.7,827.5 L375.9,829.1 L378.0,833.6 L379.9,824.2 L381.6,816.2 L383.2,793.5 L384.0,774.1 L384.8,745.0 L385.9,701.7 L387.2,682.3 L389.3,651.5 L391.3,646.7 L392.4,643.1 L393.7,648.3 L396.1,658.0 L398.1,666.9 L400.6,662.0 L402.6,675.8 L404.7,688.7 L406.6,703.3 L408.2,716.2 L409.9,727.5 L411.5,741.3 L412.0,745.0 L413.9,753.1 L416.3,764.4 L417.9,782.2 L420.4,791.9 L422.0,796.7 L423.6,791.1 L426.0,793.5 L429.3,803.2 L432.5,791.1 L437.3,804.0 L440.6,798.4 L443.8,788.7 L445.4,777.3 L446.6,761.2 L447.0,745.0 L447.9,711.4 L449.0,670.9 L449.8,630.5 L450.4,612.7 L452.7,618.4 L454.3,622.4 L456.8,628.1 L457.6,651.5 L458.7,675.8 L459.5,703.3 L460.5,727.5 L461.0,745.0 L461.6,782.2 L464.0,789.5 L466.5,809.7 L468.6,802.4 L472.1,801.6 L475.3,800.0 L477.8,800.0 L480.2,801.6 L484.2,793.5 L485.4,788.7 L487.5,802.4 L490.4,791.9 L492.3,798.4 L495.6,812.1 L498.8,805.6 L502.8,800.8 L506.1,805.6 L510.9,810.5 L514.2,808.9 L517.4,817.8 L520.0,820.2 L522.3,815.3 L525.0,807.3 L527.1,811.3 L529.6,798.4 L532.5,787.4 L533.6,769.3 L533.9,745.0 L534.1,716.2 L534.9,666.1 L536.0,638.6 L537.3,624.0 L538.4,618.4 L539.6,635.4 L540.5,649.9 L541.2,687.1 L542.0,745.0 L542.8,777.3 L543.3,804.0 L544.9,808.9 L546.5,812.1 L549.0,799.2 L551.4,804.0 L553.8,809.7 L555.4,813.7 L557.9,809.7 L560.0,808.9 L561.9,814.5 L565.9,820.2 L567.6,829.1 L569.2,838.8 L570.8,846.9 L573.2,834.7 L575.6,842.0 L578.9,846.9 L580.5,855.0 L582.1,861.4 L586.2,858.2 L587.8,852.5 L589.4,850.9 L591.0,858.2 L594.2,861.4 L597.5,858.2 L599.1,850.9 L603.1,847.7 L606.4,843.6 L608.8,837.2 L611.7,830.7 L614.0,827.1 L616.9,830.7 L619.3,838.8 L620.9,850.1 L622.5,861.4 L624.6,855.0 L626.3,842.8 L628.2,841.2 L630.6,838.8 L632.2,846.1 L633.9,829.1 L634.7,833.1 L636.3,838.8 L638.7,850.1 L639.5,844.4 L641.9,842.0 L644.4,851.7 L646.8,861.4 L654.1,861.4 L655.4,846.1 L658.6,842.8 L660.5,853.3 L663.8,861.4 L671.0,855.8 L674.3,861.4 L682.4,852.5 L684.8,861.4 L697.7,856.6 L701.8,852.0 L704.2,861.4 L722.0,855.8 L726.0,861.4 L727.6,855.0 L730.1,846.1 L733.3,849.3 L735.7,842.0 L738.2,850.1 L741.4,842.0 L744.6,846.9 L748.7,855.0 L750.3,851.7 L750.8,838.0 L754.0,835.6 L756.5,829.1 L759.7,817.8 L762.1,810.5 L764.9,809.7 L767.5,829.1 L770.2,817.8 L772.3,810.5 L775.9,808.9 L778.8,804.8 L780.7,797.6 L784.0,800.8 L786.4,807.3 L791.7,807.3 L794.5,812.1 L797.2,816.2 L800.1,824.2 L802.6,825.0 L804.7,819.4 L807.4,822.6 L810.6,829.1 L812.7,843.6 L815.5,821.0 L817.9,805.6 L820.8,804.0 L823.6,808.9 L826.3,800.0 L829.2,806.4 L831.7,812.9 L834.1,829.1 L836.0,841.2 L839.7,844.4 L842.5,846.9 L844.6,833.1 L847.0,833.9 L850.3,839.6 L852.2,829.1 L855.1,831.5 L858.7,829.1 L860.8,821.0 L861.6,800.0 L862.9,777.3 L864.0,757.9 L865.1,745.0 L865.6,722.0 L866.8,728.8 L867.7,751.5 L869.3,770.9 L871.3,794.3 L873.7,791.1 L876.9,789.5 L879.4,782.2 L881.8,771.7 L884.2,751.5 L887.5,739.8 L889.1,722.0 L891.5,689.7 L894.4,659.8 L898.0,653.3 L899.6,668.7 L901.2,692.9 L902.8,715.6 L904.4,738.2 L906.0,757.9 L907.7,783.8 L910.1,790.3 L912.5,796.7 L914.5,801.6 L916.6,795.5 L919.8,794.8 L921.1,777.3 L923.0,769.3 L924.3,748.2 L926.3,730.1 L928.7,709.1 L930.3,694.5 L931.9,707.5 L934.3,713.1 L938.4,713.1 L940.5,736.6 L943.2,746.3 L945.7,760.8 L947.6,773.3 L951.3,775.7 L954.1,780.6 L956.2,789.5 L957.8,801.6 L960.2,816.2 L962.6,827.5 L964.3,820.2 L966.7,821.0 L969.1,825.9 L972.3,831.5 L975.6,821.0 L978.3,814.5 L980.4,822.6 L982.9,828.3 L986.4,832.3 L988.5,826.7 L990.9,829.1 L994.2,825.0 L997.4,820.2 L999.8,814.5 L1002.3,824.2 L1004.7,825.9 L1007.1,832.3 L1010.3,846.1 L1013.6,852.5 L1017.6,858.2 L1021.7,850.1 L1024.1,845.3 L1028.1,844.4 L1030.6,830.7 L1033.0,812.1 L1036.5,812.1 L1039.5,822.6 L1041.9,842.0 L1044.3,853.3 L1048.3,849.3 L1049.5,840.4 L1050.5,856.6 L1052.4,861.4 L1068.6,861.4 L1071.8,877.6 L1074.3,875.2 L1076.7,874.4 L1079.1,882.5 L1081.5,894.6 L1084.8,884.1 L1087.5,878.4 L1090.4,885.7 L1092.4,891.3 L1095.3,887.3 L1097.2,896.2 L1100.5,883.3 L1103.4,892.2 L1105.8,880.8 L1108.2,873.6 L1111.4,872.7 L1113.9,885.7 L1116.0,876.0 L1119.5,874.4 L1122.0,878.4 L1124.4,895.4 L1126.8,878.4 L1129.2,873.6 L1131.7,878.4 L1134.4,885.7 L1137.3,892.5 L1140.6,890.5 L1143.0,885.7 L1145.4,891.3 L1148.6,888.1 L1151.1,878.4 L1153.5,879.2 L1156.7,876.0 L1160.0,871.5 L1163.2,871.9 L1167.2,872.7 L1169.7,859.0 L1172.1,872.7 L1173.7,855.0 L1174.8,832.3 L1176.1,809.7 L1177.4,791.9 L1178.6,809.7 L1179.4,822.6 L1180.7,834.7 L1183.4,843.6 L1185.8,861.4 L1188.3,878.4 L1190.7,870.3 L1193.9,866.0 L1196.3,860.6 L1198.8,867.9 L1201.2,873.6 L1205.2,871.1 L1207.7,868.7 L1209.8,871.1 L1211.7,861.4 L1213.3,855.0 L1215.7,850.1 L1218.2,847.7 L1220.6,847.7 L1223.3,856.6 L1225.9,845.3 L1228.4,838.0 L1230.8,846.9 L1233.5,855.8 L1236.0,851.7 L1239.2,851.7 L1241.1,863.9 L1244.0,867.9 L1247.3,875.2 L1249.7,874.4 L1252.1,896.2 L1254.6,891.3 L1257.0,887.3 L1260.2,889.7 L1262.6,894.6 L1265.4,901.9 L1268.3,892.2 L1271.2,883.3 L1273.5,885.7 L1276.4,878.4 L1278.8,891.3 L1281.2,890.5 L1284.8,897.0 L1286.4,906.7 L1289.3,904.3 L1292.6,901.0 L1295.0,904.3 L1297.4,897.0 L1299.8,897.8 L1302.6,896.2 L1305.2,883.3 L1307.9,878.4 L1310.3,872.7 L1313.3,871.5 L1316.0,877.6 L1319.2,877.9 L1321.7,875.2 L1324.1,868.2 L1326.5,867.1 L1328.9,872.7 L1332.2,879.2 L1333.8,894.6 L1337.0,892.2 L1339.5,879.2 L1340.6,870.3 L1341.9,879.2 L1345.1,883.3 L1348.3,882.5 L1350.5,880.8 L1353.2,884.9 L1355.0,884.1 L1356.5,880.0 L1358.1,889.7 L1361.3,893.4 L1364.6,894.6 L1366.2,888.1 L1369.4,885.7 L1372.6,880.8 L1375.9,878.9 L1378.3,878.4 L1380.7,875.7 L1382.3,881.6 L1384.8,869.5 L1388.0,871.1 L1390.4,882.5 L1392.9,885.7 L1396.1,872.7 L1398.5,870.3 L1401.7,867.9 L1404.7,860.1 L1406.6,874.4 L1409.0,893.0 L1411.4,887.3 L1414.4,874.4 L1417.1,870.8 L1419.9,875.7 L1422.8,875.7 L1425.7,867.1 L1428.4,863.9 L1430.9,865.5 L1433.3,880.8 L1436.0,874.4 L1438.6,879.2 L1442.2,881.6 L1443.8,880.8 L1446.7,884.9 L1449.4,869.5 L1452.2,869.8 L1454.8,875.2 L1458.0,870.3 L1460.3,867.9 L1462.4,885.7 L1465.6,886.0 L1468.4,888.1 L1470.5,875.2 L1472.9,876.8 L1476.1,880.8 L1478.6,889.7 L1481.0,877.6 L1483.4,876.3 L1485.8,878.4 L1489.1,876.0 L1492.3,876.0 L1494.4,888.1 L1497.2,878.4 L1500.4,875.2 L1502.0,885.7 L1505.2,888.9 L1507.7,884.9 L1510.1,868.7 L1512.5,863.0 L1514.9,861.4 L1518.2,863.0 L1522.2,862.7 L1525.9,861.8 L1527.9,855.0 L1529.8,845.3 L1531.9,837.2 L1534.3,831.5 L1537.6,831.5 L1540.0,838.0 L1543.2,838.8 L1547.3,838.5 L1550.5,844.9 L1552.9,837.2 L1556.2,834.7 L1558.6,829.1 L1561.0,823.4 L1563.5,810.5 L1566.7,809.7 L1569.1,796.7 L1571.2,774.9 L1574.0,769.3 L1576.4,762.8 L1578.8,750.7 L1581.2,750.7 L1584.5,747.4 L1587.2,738.9 L1589.8,745.0 L1590.9,748.2 L1592.6,754.7 L1595.0,772.5 L1597.4,785.4 L1600.6,794.3 L1603.9,804.0 L1606.3,812.9 L1608.7,814.9 L1612.0,818.6 L1616.8,820.2 L1619.2,814.5 L1621.7,816.2 L1624.9,810.5 L1627.3,816.2 L1630.6,816.2 L1633.0,812.9 L1635.4,814.5 L1638.6,810.5 L1641.1,805.2 L1643.5,814.5 L1647.5,815.3 L1649.2,814.5 L1651.6,820.2 L1654.0,808.9 L1655.0,808.9 L1657.0,811.3 L1658.6,791.9 L1660.3,785.4 L1662.7,778.1 L1665.1,784.6 L1667.5,792.7 L1670.8,784.1 L1675.6,783.8 L1678.5,775.7 L1681.3,787.0 L1683.7,791.1 L1689.4,793.5 L1691.3,786.7 L1694.2,793.5 L1698.3,798.4 L1700.4,809.7 L1702.3,819.4 L1704.7,811.3 L1707.5,807.3 L1710.4,808.1 L1713.3,816.2 L1716.0,809.7 L1718.5,803.2 L1721.7,803.2 L1723.3,812.9 L1726.6,815.3 L1729.5,814.9 L1732.2,824.2 L1735.9,827.5 L1737.9,830.7 L1739.5,839.6 L1741.9,825.9 L1744.3,824.6 L1747.6,826.7 L1750.8,825.0 L1753.2,819.1 L1755.7,819.7 L1758.1,830.7 L1761.3,842.0 L1763.8,825.9 L1766.7,820.2 L1768.9,829.9 L1771.8,833.9 L1774.3,832.3 L1777.5,819.7 L1779.9,823.4 L1783.2,832.3 L1785.6,840.4 L1787.7,846.1 L1790.4,837.2 L1792.9,833.9 L1796.1,832.3 L1799.3,829.1 L1802.6,822.6 L1804.2,819.4 L1806.6,824.2 L1808.7,820.2 L1809.8,814.5 L1810.6,806.4 L1811.1,766.0 L1811.5,714.6 L1811.9,674.2 L1812.6,632.1 L1813.4,592.5 L1815.5,590.9 L1816.8,582.0" stroke="#000" stroke-width="2"/>
<path d="M219.5,659.6 L221.5,666.1 L224.7,665.3 L227.9,661.2 L230.4,653.2 L232.5,644.3 L235.2,645.4 L238.1,649.9 L240.4,657.2 L242.5,669.3 L244.9,685.5 L247.3,698.4 L249.8,705.7 L252.2,713.0 L254.6,724.3 L257.0,735.6 L259.5,742.1 L261.9,745.0 L263.2,747.7 L264.8,743.7 L266.7,738.0 L270.0,740.1 L274.0,738.9 L277.3,737.2 L280.5,732.4 L282.6,735.6 L284.5,741.3 L287.0,745.0 L288.6,746.9 L290.2,741.3 L291.8,745.0 L292.6,749.9 L295.0,752.3 L297.5,750.7 L299.9,756.3 L303.1,763.6 L305.6,760.4 L308.0,756.3 L310.4,767.6 L312.8,776.5 L315.3,781.4 L317.7,774.9 L320.1,778.1 L322.5,783.8 L325.0,783.0 L327.4,771.7 L329.0,768.4 L330.6,771.7 L333.0,791.1 L336.3,787.9 L339.5,788.7 L341.9,783.8 L344.4,770.9 L346.0,779.0 L348.4,791.9 L350.0,800.8 L354.1,802.4 L357.3,804.0 L360.5,800.0 L363.0,791.9 L365.4,792.7 L367.8,806.4 L370.2,812.9 L373.5,822.6 L376.7,833.1 L378.3,837.2 L379.9,825.9 L381.9,814.5 L383.5,791.9 L384.5,772.5 L384.8,745.0 L385.6,703.3 L386.9,682.3 L388.8,654.8 L390.5,641.8 L392.4,631.3 L394.2,641.8 L396.1,654.8 L398.5,667.7 L401.0,679.0 L402.6,692.0 L404.5,708.1 L405.8,716.2 L408.2,719.5 L409.9,729.2 L411.5,742.1 L412.0,745.0 L413.6,753.1 L415.8,766.0 L417.9,783.8 L420.0,791.9 L422.0,800.0 L424.4,814.5 L426.0,801.6 L428.5,795.1 L431.7,801.6 L434.1,805.6 L437.3,807.3 L440.6,806.4 L443.0,805.6 L444.3,790.3 L445.9,775.7 L447.0,759.6 L447.5,745.0 L447.5,711.4 L448.7,670.9 L449.5,630.5 L450.4,611.1 L452.7,617.6 L454.6,621.6 L456.3,628.9 L457.2,651.5 L458.4,675.8 L459.2,703.3 L460.1,727.5 L460.8,745.0 L462.1,782.2 L464.8,791.9 L467.3,801.6 L469.7,800.8 L472.1,793.5 L474.5,786.2 L476.6,789.5 L479.4,785.4 L481.8,783.5 L484.2,791.9 L486.7,798.4 L488.0,807.3 L489.9,799.2 L492.3,795.9 L495.6,800.8 L498.0,802.4 L501.2,815.3 L504.5,794.3 L506.9,793.5 L509.3,800.0 L511.7,809.7 L514.2,824.2 L517.4,812.9 L520.0,798.4 L522.3,799.2 L524.7,807.3 L527.1,814.5 L529.6,813.7 L532.0,798.4 L533.3,785.4 L533.8,745.0 L534.4,716.2 L535.5,666.1 L536.8,635.4 L538.4,612.7 L539.6,630.5 L540.5,649.9 L541.4,687.1 L542.2,745.0 L542.8,761.2 L544.1,787.0 L546.5,795.9 L549.0,798.4 L551.4,801.6 L553.8,807.3 L556.2,809.7 L558.7,822.6 L561.1,825.9 L563.5,825.0 L566.7,822.6 L570.0,825.9 L573.2,823.4 L577.3,831.5 L579.7,838.8 L582.1,848.5 L583.7,855.0 L586.2,844.4 L590.2,842.0 L594.2,846.1 L596.7,841.2 L599.1,840.4 L602.3,848.5 L604.7,846.1 L607.2,843.6 L610.4,835.6 L612.0,838.0 L614.4,833.1 L616.1,838.0 L618.5,825.9 L621.7,825.0 L625.0,830.7 L628.2,837.2 L630.6,838.8 L633.9,835.6 L637.1,834.7 L639.5,838.0 L642.7,842.0 L644.4,839.6 L647.6,844.4 L650.0,835.6 L653.3,829.1 L656.5,834.7 L659.7,830.7 L663.0,834.7 L666.2,827.5 L669.4,830.7 L671.5,839.6 L674.3,816.2 L677.2,810.5 L679.9,825.9 L683.2,816.2 L686.4,819.4 L690.5,812.9 L692.9,811.3 L696.1,824.2 L701.0,816.2 L703.4,812.9 L707.4,800.0 L711.5,795.9 L714.7,807.3 L717.1,812.9 L720.4,798.4 L722.8,792.7 L726.0,804.8 L728.5,793.5 L730.9,783.8 L734.9,783.0 L738.2,786.2 L740.6,775.7 L743.8,765.2 L747.0,778.1 L749.5,768.0 L750.0,767.3 L752.4,759.2 L755.7,756.0 L758.9,751.9 L762.1,750.3 L764.6,743.9 L767.0,744.7 L771.0,751.1 L773.4,748.7 L775.1,741.8 L778.3,742.7 L780.7,754.4 L784.0,747.9 L786.4,742.7 L788.8,748.7 L791.7,741.8 L794.5,744.7 L799.3,739.8 L801.7,750.3 L804.7,757.9 L807.4,752.7 L810.6,761.2 L813.9,745.5 L816.0,740.6 L818.2,739.8 L823.6,745.5 L826.0,736.6 L828.4,725.3 L830.9,736.6 L832.8,739.8 L834.1,740.1 L836.5,746.3 L842.5,733.0 L845.4,744.7 L847.8,750.3 L851.1,746.6 L853.2,748.7 L855.4,759.2 L858.3,736.6 L860.8,743.0 L863.2,720.4 L866.4,703.9 L868.0,722.0 L871.0,752.7 L873.7,736.6 L876.1,725.3 L878.9,736.3 L881.8,724.4 L884.2,727.7 L886.6,718.8 L889.1,697.8 L892.3,670.3 L895.5,652.5 L898.4,643.6 L900.4,665.4 L902.8,689.7 L906.0,704.2 L908.5,722.0 L910.9,730.9 L914.1,726.9 L916.6,730.9 L919.8,743.0 L922.2,742.7 L924.6,736.6 L927.1,715.6 L930.3,679.7 L933.5,689.7 L937.6,704.2 L940.0,717.2 L943.2,722.0 L945.7,726.9 L948.1,735.0 L951.3,739.8 L954.1,746.3 L957.0,740.6 L960.2,740.1 L963.5,744.3 L966.7,736.3 L969.1,745.5 L971.5,748.7 L974.8,747.1 L978.0,740.6 L980.9,736.6 L983.7,741.4 L986.4,745.5 L989.0,731.7 L990.9,736.6 L995.0,740.1 L997.4,739.0 L1001.5,742.2 L1004.7,735.8 L1007.1,743.9 L1010.3,749.5 L1012.0,748.7 L1015.2,755.2 L1018.4,754.4 L1020.9,740.6 L1023.3,733.7 L1025.7,744.7 L1028.1,743.9 L1031.4,733.3 L1033.8,730.1 L1036.5,725.6 L1039.5,734.2 L1041.9,735.0 L1045.1,737.4 L1047.5,735.8 L1052.4,747.1 L1055.0,743.9 L1057.3,739.3 L1061.0,734.5 L1065.4,751.1 L1068.6,744.7 L1071.0,744.7 L1073.9,749.0 L1079.1,749.5 L1081.5,759.5 L1084.3,767.3 L1087.2,752.3 L1089.6,750.6 L1092.4,743.4 L1095.0,741.7 L1097.7,747.4 L1100.5,743.4 L1105.0,745.8 L1107.4,754.7 L1111.4,770.0 L1113.9,738.5 L1116.6,732.4 L1119.5,738.5 L1123.6,752.3 L1127.3,763.1 L1130.0,749.8 L1132.5,743.4 L1137.3,739.8 L1140.6,747.4 L1143.0,750.2 L1145.4,755.0 L1148.6,753.9 L1151.6,752.3 L1153.8,757.1 L1156.4,750.6 L1159.2,761.2 L1161.6,751.4 L1164.5,745.0 L1166.8,751.1 L1169.7,759.2 L1172.9,757.6 L1175.8,757.1 L1177.4,742.6 L1180.2,742.1 L1183.4,735.3 L1185.5,734.5 L1187.1,746.6 L1188.7,759.5 L1191.5,758.7 L1193.6,745.8 L1196.3,745.3 L1198.8,753.9 L1201.2,745.0 L1203.6,743.0 L1206.9,749.0 L1209.3,747.4 L1212.5,756.3 L1215.7,754.7 L1218.2,749.8 L1220.6,749.0 L1223.3,763.1 L1226.3,759.9 L1228.7,758.7 L1231.4,758.7 L1234.3,752.3 L1237.6,747.4 L1239.5,745.3 L1241.6,749.8 L1244.5,761.2 L1247.3,756.6 L1249.2,753.4 L1252.1,759.2 L1255.0,758.2 L1257.8,773.3 L1260.2,769.2 L1263.5,770.9 L1266.7,772.1 L1271.2,773.3 L1273.5,761.5 L1275.6,769.2 L1278.8,778.1 L1281.2,776.5 L1284.5,790.3 L1287.7,786.2 L1291.8,783.5 L1294.5,791.1 L1297.4,794.3 L1300.3,785.4 L1302.6,795.9 L1305.5,795.1 L1308.4,779.7 L1310.3,791.9 L1313.3,797.5 L1316.0,796.7 L1318.4,802.4 L1321.3,796.7 L1324.1,804.0 L1326.5,812.9 L1328.9,816.1 L1332.2,804.8 L1334.6,809.7 L1337.0,824.2 L1341.1,820.2 L1345.9,816.9 L1349.2,818.6 L1352.4,826.6 L1355.0,827.5 L1355.7,828.3 L1358.1,826.7 L1361.3,838.8 L1364.6,839.1 L1366.2,829.1 L1368.6,833.1 L1372.3,848.5 L1375.9,837.2 L1378.8,829.9 L1380.7,828.6 L1383.1,832.3 L1385.9,841.2 L1388.8,847.2 L1390.4,843.3 L1392.9,847.2 L1396.1,838.8 L1398.5,837.2 L1401.7,838.8 L1404.2,842.8 L1406.3,855.8 L1409.0,845.3 L1412.3,843.3 L1415.5,850.9 L1417.9,852.0 L1420.3,847.2 L1422.8,850.9 L1425.2,853.0 L1428.4,843.6 L1430.5,837.5 L1433.3,846.1 L1437.3,846.9 L1438.9,849.3 L1441.4,849.3 L1446.2,854.2 L1449.4,852.5 L1452.2,853.0 L1455.1,857.4 L1457.5,857.4 L1460.3,863.4 L1463.2,859.8 L1465.1,855.8 L1468.0,860.1 L1470.5,856.6 L1473.7,866.3 L1476.5,873.6 L1479.0,864.7 L1481.8,859.0 L1484.2,860.6 L1487.5,860.6 L1489.9,864.7 L1492.3,872.7 L1494.7,878.4 L1497.2,875.2 L1500.4,874.0 L1502.8,867.6 L1506.0,871.9 L1508.5,874.4 L1510.1,884.4 L1512.5,874.4 L1514.6,862.2 L1516.6,855.3 L1519.0,858.2 L1521.4,859.8 L1524.6,855.8 L1526.6,861.1 L1529.2,846.9 L1531.9,840.4 L1534.3,838.0 L1537.6,837.2 L1541.6,842.0 L1544.0,837.5 L1547.3,827.5 L1550.5,817.8 L1553.4,811.3 L1555.7,821.0 L1558.6,807.3 L1561.0,800.8 L1563.5,796.7 L1566.7,804.0 L1569.1,791.9 L1571.2,782.5 L1574.8,782.2 L1577.2,767.6 L1578.8,752.3 L1581.2,745.0 L1582.9,738.9 L1585.3,737.2 L1586.9,742.1 L1589.3,746.6 L1591.3,748.2 L1593.4,759.6 L1595.8,782.2 L1599.0,804.5 L1601.5,798.4 L1603.9,786.2 L1606.3,796.7 L1608.7,821.0 L1612.0,818.6 L1616.8,823.4 L1620.0,814.5 L1622.5,812.1 L1624.9,817.0 L1627.8,825.9 L1631.4,816.2 L1634.6,810.5 L1637.8,808.9 L1641.1,812.9 L1646.7,823.4 L1649.2,808.1 L1652.4,807.3 L1655.0,807.3 L1655.4,805.6 L1657.8,804.0 L1659.4,811.3 L1661.9,798.4 L1664.3,782.2 L1665.9,775.7 L1668.7,774.1 L1670.8,771.2 L1673.2,779.0 L1675.6,790.3 L1678.5,804.8 L1681.0,790.3 L1683.7,791.9 L1686.9,793.5 L1689.4,798.4 L1691.8,810.5 L1694.2,803.2 L1697.5,796.7 L1699.9,809.7 L1702.3,825.9 L1705.5,834.7 L1708.0,816.2 L1711.2,806.4 L1713.6,807.3 L1716.0,801.6 L1719.3,812.9 L1723.3,813.7 L1726.6,817.8 L1729.5,827.5 L1732.2,829.1 L1735.9,825.0 L1737.9,829.1 L1741.1,829.9 L1744.3,825.0 L1747.3,832.3 L1750.0,824.2 L1752.4,816.5 L1754.9,825.9 L1757.3,828.3 L1762.1,827.5 L1765.4,826.7 L1768.6,828.3 L1771.8,823.4 L1774.3,829.1 L1777.5,832.3 L1781.5,834.7 L1785.6,837.2 L1788.0,842.0 L1790.4,845.3 L1792.9,838.0 L1796.1,825.9 L1798.5,818.6 L1801.8,817.8 L1803.9,810.5 L1805.8,816.2 L1809.0,825.9 L1810.6,816.2 L1811.5,793.5 L1812.6,772.5 L1813.6,721.1 L1814.2,669.3 L1815.0,630.5 L1815.8,611.1 L1817.1,582.0" stroke="#876657" stroke-width="1"/>
</g>
<rect x="219.5" y="582.5" width="1598" height="325" fill="none" stroke="#000" stroke-width="1"/>
<path d="M1816.5,582V908" stroke="#000" stroke-width="1"/>
<rect x="262" y="862" width="810" height="40" fill="#000"/>
<rect x="256.5" y="856.5" width="812" height="42" fill="#fff" stroke="#000" stroke-width="1"/>
<path d="M287,866.5H430" stroke="#876657" stroke-width="1"/>
<path d="M287,888H430" stroke="#000" stroke-width="2"/>
</svg>

<!-- text labels top -->
<div id="fq1" class="lbl fq" style="left:953px;top:479px">Frequency (Hz)</div>
<div id="fq2" class="lbl fq" style="left:953px;top:940px">Frequency (Hz)</div>
<div id="mg1" class="lbl mg" style="left:0;top:0;transform-origin:0 0;transform:translate(79px,330px) rotate(-90deg)">Magnitude</div>
<div id="mg2" class="lbl mg" style="left:0;top:0;transform-origin:0 0;transform:translate(79px,791px) rotate(-90deg)">Magnitude</div>
<div id="t01" class="lbl bt" style="left:68px;top:509px;color:#ff0000">*T0=16/02/2026 08:06:33</div>
<div id="av1" class="lbl bt" style="left:938px;top:509px;color:#ff0000">*Avg=50</div>
<div id="bw1" class="lbl bt" style="left:1764px;top:509px">BW=0.374999</div>
<div id="t02" class="lbl bt" style="left:68px;top:970px;color:#876657">*T0=16/02/2026 08:06:33</div>
<div id="av2" class="lbl bt" style="left:938px;top:970px;color:#876657">*Avg=50</div>
<div id="bw2" class="lbl bt" style="left:1764px;top:970px">BW=0.374999</div>
<div class="xt" style="left:295.5px;top:450px">160</div>
<div class="xt" style="left:295.5px;top:911px">160</div>
<div class="xt" style="left:508.6px;top:450px">180</div>
<div class="xt" style="left:508.6px;top:911px">180</div>
<div class="xt" style="left:721.7px;top:450px">200</div>
<div class="xt" style="left:721.7px;top:911px">200</div>
<div class="xt" style="left:934.7px;top:450px">220</div>
<div class="xt" style="left:934.7px;top:911px">220</div>
<div class="xt" style="left:1147.8px;top:450px">240</div>
<div class="xt" style="left:1147.8px;top:911px">240</div>
<div class="xt" style="left:1360.9px;top:450px">260</div>
<div class="xt" style="left:1360.9px;top:911px">260</div>
<div class="xt" style="left:1573.9px;top:450px">280</div>
<div class="xt" style="left:1573.9px;top:911px">280</div>
<div class="xt" style="left:1787.0px;top:450px">300</div>
<div class="xt" style="left:1787.0px;top:911px">300</div>

<div class="yt" style="left:143px;top:226.8px">10<sup><i>&minus;</i>2</sup></div>
<div class="yt" style="left:143px;top:357.8px">10<sup><i>&minus;</i>3</sup></div>
<div class="yt" style="left:142.5px;top:697.8px">10<sup><i>&minus;</i>5</sup></div>
<div class="lbl ax" style="left:1106px;top:131px">K1:CAL-CS_PROC_DARM_DISPLACEMENT_DQ</div>
<div class="lbl ax" style="left:1106px;top:152px">K1:CAL-CS_PROC_DARM_DISPLACEMENT_DQ(REF0)</div>
<div class="lbl ax" style="left:459px;top:857px">K1:IMC-REFL_QPDA1_DC_PIT_OUT_DQ</div>
<div class="lbl ax" style="left:459px;top:878px">K1:IMC-REFL_QPDA1_DC_PIT_OUT_DQ(REF1)</div>

<!-- bottom buttons -->
<div class="abs" style="left:6px;top:989px;width:1909px;height:19px;background:#e8e8e8"></div>
<div class="bbtn" style="left:10px">Reset</div><div class="bbtn" style="left:200px">Zoom</div><div class="bbtn" style="left:390px">Active</div><div class="bbtn" style="left:580px">New</div><div class="bbtn" style="left:770px">Options...</div><div class="bbtn" style="left:960px">Import...</div><div class="bbtn" style="left:1150px">Export...</div><div class="bbtn" style="left:1340px">Reference...</div><div class="bbtn" style="left:1530px">Calibration...</div><div class="bbtn" style="left:1720px">Print...</div>
</div></body></html>
